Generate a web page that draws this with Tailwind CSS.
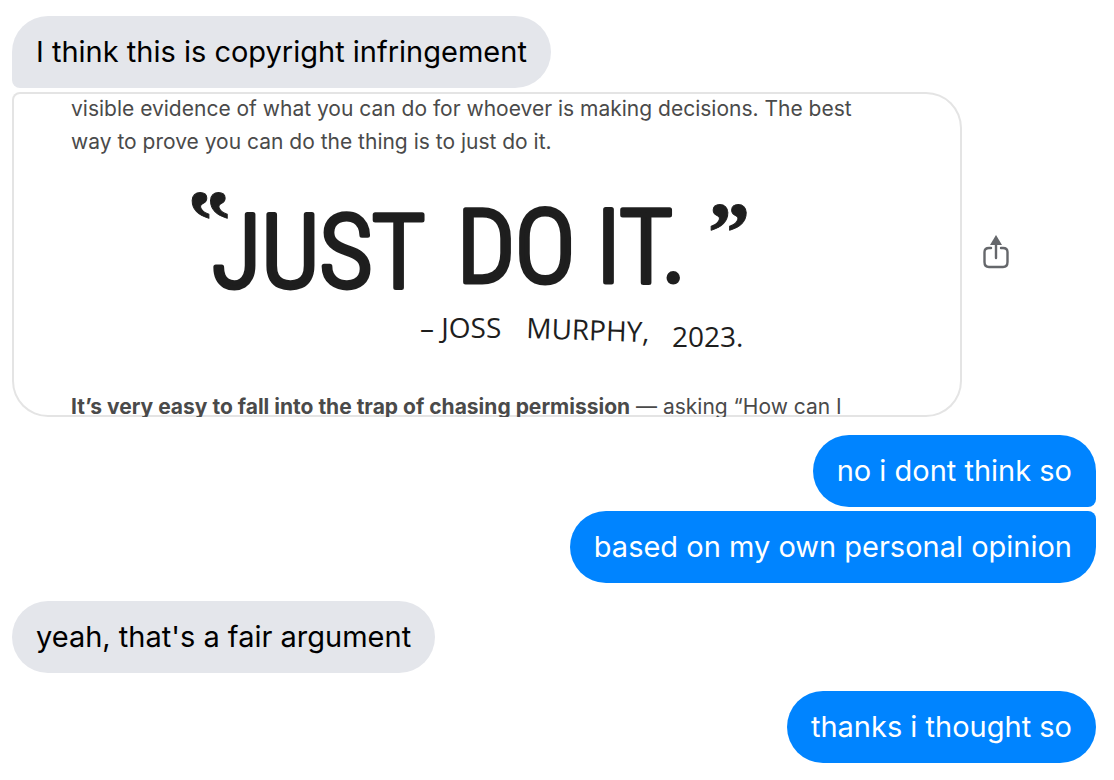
<!DOCTYPE html>
<html lang="en">

<head>
    <meta charset="UTF-8">
    <meta name="viewport" content="width=device-width, initial-scale=1.0">
    <title>Chat</title>
    <script src="https://cdn.jsdelivr.net/npm/@tailwindcss/browser@4"></script>
</head>

<body class="bg-white font-['Inter',sans-serif] text-black">
    <main class="flex flex-col pt-4 pb-4 pl-3 pr-[18px] text-[29px] leading-10">
        <!-- Received -->
        <div class="flex flex-col items-start gap-1">
            <p class="bg-[#e4e6eb] rounded-[36px] rounded-bl-lg px-6 py-4">I think this is copyright infringement</p>

            <div class="flex items-center gap-[18px]">
                <div class="w-[950px] overflow-hidden rounded-[36px] rounded-tl-lg inset-ring-2 inset-ring-[#e4e4e4] px-[59px] text-[21px] leading-[33px] text-[#4a4a4a]">
                    <p class="w-[800px]">visible evidence of what you can do for whoever is making decisions. The best way to prove you can do the thing is to just do it.</p>
                    <svg viewBox="0 0 800 232" class="block w-[800px] h-[232px]" fill="#1e1e1e" stroke="#1e1e1e" stroke-linejoin="round">
                        <g font-family="Roboto Condensed, Open Sans Condensed, Open Sans, sans-serif" font-size="102" font-weight="300" stroke-width="5">
                            <text x="141" y="129">JUST</text>
                            <text x="386" y="124">DO</text>
                            <text x="525" y="124">IT.</text>
                        </g>
                        <g font-family="Liberation Serif, serif" font-size="84" font-weight="700">
                            <text x="118" y="91">‟</text>
                            <text x="637" y="103">”</text>
                        </g>
                        <g font-family="Open Sans, sans-serif" font-size="28" stroke="none">
                            <text x="349" y="180">– JOSS</text>
                            <text x="455" y="180" transform="rotate(2 455 180)">MURPHY,</text>
                            <text x="601" y="189">2023.</text>
                        </g>
                    </svg>
                    <p class="h-[27px] whitespace-nowrap"><strong class="font-bold">It’s very easy to fall into the trap of chasing permission</strong> — asking “How can I</p>
                </div>
                <button type="button" aria-label="Share" class="text-[#65676b] pb-1">
                    <svg viewBox="0 0 32 36" class="block w-8 h-9" fill="none" stroke="currentColor" stroke-width="2.4" stroke-linecap="round">
                        <path d="M11 13H9Q4.500 13 4.500 17V27Q4.500 32 9 32H23Q27.500 32 27.500 27V17Q27.500 13 23 13H21" />
                        <path d="M16 8V23" />
                        <path d="M16 0L22 10H10Z" fill="currentColor" stroke="none" />
                    </svg>
                </button>
            </div>
        </div>

        <!-- Sent -->
        <div class="flex flex-col items-end gap-1 mt-[18px] text-white">
            <p class="bg-[#0084ff] rounded-[36px] rounded-br-lg px-6 py-4">no i dont think so</p>
            <p class="bg-[#0084ff] rounded-[36px] rounded-tr-lg px-6 py-4">based on my own personal opinion</p>
        </div>

        <div class="flex flex-col items-start mt-[18px]">
            <p class="bg-[#e4e6eb] rounded-[36px] px-6 py-4">yeah, that's a fair argument</p>
        </div>

        <div class="flex flex-col items-end mt-[18px] text-white">
            <p class="bg-[#0084ff] rounded-[36px] px-6 py-4">thanks i thought so</p>
        </div>
    </main>
</body>

</html>
